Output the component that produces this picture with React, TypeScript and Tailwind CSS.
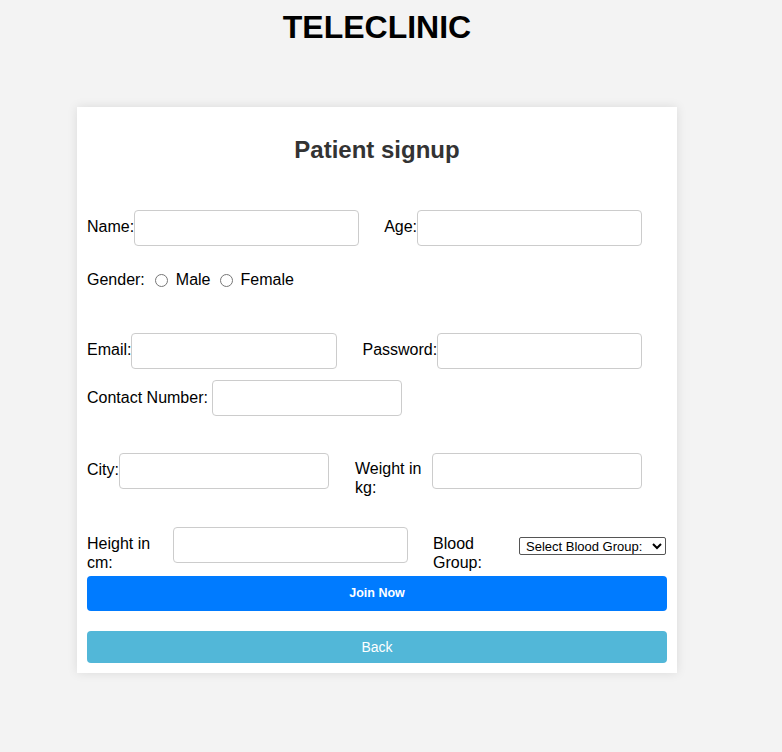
import type { ReactNode } from "react";

const inputClass =
  "h-[36px] rounded-[4px] border border-[#cccccc] bg-white px-2 text-[13px] outline-none";

function Label({ children, className = "" }: { children: ReactNode; className?: string }) {
  return <span className={`text-[16px] leading-[18.4px] text-black ${className}`}>{children}</span>;
}

export default function App() {
  return (
    <div className="min-h-screen w-full bg-[#f3f3f3] font-['Liberation_Sans',Arial,sans-serif]">
      <div className="w-[754px] pt-[9px] pb-[79px]">
        <h1 className="text-center text-[32px] font-bold leading-[37px] text-black">TELECLINIC</h1>

        <div className="mx-auto mt-[61px] w-[600px] bg-white p-[10px] shadow-[0_0_10px_rgba(0,0,0,0.1)]">
          <h2 className="mt-[19px] text-center text-[24px] font-bold leading-[28px] text-[#333333]">
            Patient signup
          </h2>

          <form className="flex flex-col">
            {/* name / age */}
            <div className="mt-[46px] flex items-start">
              <Label className="mt-[8px]">Name:</Label>
              <input className={`${inputClass} w-[225px]`} />
              <Label className="ml-[25px] mt-[8px]">Age:</Label>
              <input className={`${inputClass} w-[225px]`} />
            </div>

            {/* gender */}
            <div className="mt-[25px] flex items-center text-[16px] leading-[18.4px]">
              <span>Gender:</span>
              <input type="radio" name="gender" className="ml-[10px] mr-[8px] h-[13px] w-[13px]" />
              <span>Male</span>
              <input type="radio" name="gender" className="ml-[9px] mr-[8px] h-[13px] w-[13px]" />
              <span>Female</span>
            </div>

            {/* email / password */}
            <div className="mt-[44px] flex items-start">
              <Label className="mt-[8px]">Email:</Label>
              <input type="email" className={`${inputClass} w-[206px]`} />
              <Label className="ml-[25px] mt-[8px]">Password:</Label>
              <input type="password" className={`${inputClass} w-[205px]`} />
            </div>

            {/* contact */}
            <div className="mt-[11px] flex items-center">
              <Label>Contact Number:</Label>
              <input className={`${inputClass} ml-[4px] w-[190px]`} />
            </div>

            {/* city / weight */}
            <div className="mt-[37px] flex items-start">
              <Label className="mt-[8px]">City:</Label>
              <input className={`${inputClass} w-[210px]`} />
              <Label className="ml-[26px] mt-[7px] w-[77px]">Weight in kg:</Label>
              <input className={`${inputClass} w-[210px]`} />
            </div>

            {/* height / blood group */}
            <div className="mt-[30px] flex items-start">
              <Label className="mt-[8px] w-[86px]">Height in cm:</Label>
              <input className={`${inputClass} w-[235px]`} />
              <Label className="ml-[25px] mt-[8px] w-[86px]">Blood Group:</Label>
              <select className="mt-[10px] h-[18px] w-[147px] rounded-[2px] border border-[#555555] bg-white px-[2px] text-[13px] leading-[15px] text-black">
                <option>Select Blood Group:</option>
                <option>A+</option>
                <option>A-</option>
                <option>B+</option>
                <option>B-</option>
                <option>AB+</option>
                <option>AB-</option>
                <option>O+</option>
                <option>O-</option>
              </select>
            </div>

            <button
              type="button"
              className="mt-[4px] h-[35px] w-full rounded-[4px] bg-[#007bff] text-[12.5px] font-bold text-white"
            >
              Join Now
            </button>

            <button
              type="button"
              className="mt-[20px] h-[32px] w-full rounded-[4px] bg-[#52b7d8] text-[14px] text-white"
            >
              Back
            </button>
          </form>
        </div>
      </div>
    </div>
  );
}
